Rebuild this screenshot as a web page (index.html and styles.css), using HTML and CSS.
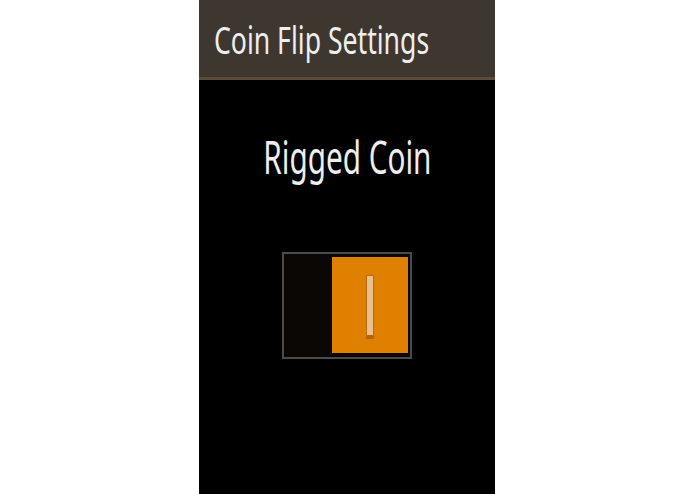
FILE: index.html
```html
<!DOCTYPE html>
<html lang="en">
<head>
<meta charset="utf-8">
<title>Coin Flip Settings</title>
<link rel="stylesheet" href="styles.css">
</head>
<body>
  <div class="screen">
    <header class="action-bar">
      <h1 class="title"><span class="narrow">Coin Flip Settings</span></h1>
    </header>
    <main class="content">
      <h2 class="label"><span class="narrow">Rigged Coin</span></h2>
      <div class="switch" role="switch" aria-checked="true">
        <div class="switch-on">
          <span class="thumb"></span>
        </div>
      </div>
    </main>
  </div>
</body>
</html>
```

FILE: styles.css
```css
html, body {
  margin: 0;
  padding: 0;
  background: #ffffff;
}

.screen {
  width: 296px;
  height: 494px;
  margin-left: 199px;
  background: #000000;
  display: flex;
  flex-direction: column;
  font-family: "Noto Sans", "DejaVu Sans", sans-serif;
  color: #eeeeee;
}

/* the device font is a narrow sans; squeeze the glyphs horizontally */
.narrow {
  display: inline-block;
  transform: scaleX(0.7);
  white-space: nowrap;
}

.action-bar {
  height: 77px;
  background: #3e3730;
  border-bottom: 3px solid #5a4b3b;
  display: flex;
  align-items: center;
}

.title {
  margin: 0;
  padding-left: 15px;
  font-size: 38px;
  font-weight: normal;
  line-height: 1;
}

.title .narrow {
  transform-origin: left center;
}

.content {
  flex: 1;
  display: flex;
  flex-direction: column;
  align-items: center;
}

.label {
  margin: 54px 0 0;
  font-size: 45px;
  font-weight: normal;
  line-height: 1;
  text-align: center;
}

.label .narrow {
  transform: scaleX(0.66);
}

.switch {
  margin-top: 73px;
  width: 130px;
  height: 107px;
  border: 2px solid #4b4b4b;
  background: #0b0704;
  padding: 3px 2px 4px 48px;
  box-sizing: border-box;
  display: flex;
}

.switch-on {
  flex: 1;
  background: #e08000;
  display: flex;
  justify-content: center;
  align-items: center;
}

.thumb {
  width: 6px;
  height: 59px;
  background: #e9c08e;
  border: 1px solid #b96a10;
  box-shadow: 0 3px 0 #b0650c;
}
```
